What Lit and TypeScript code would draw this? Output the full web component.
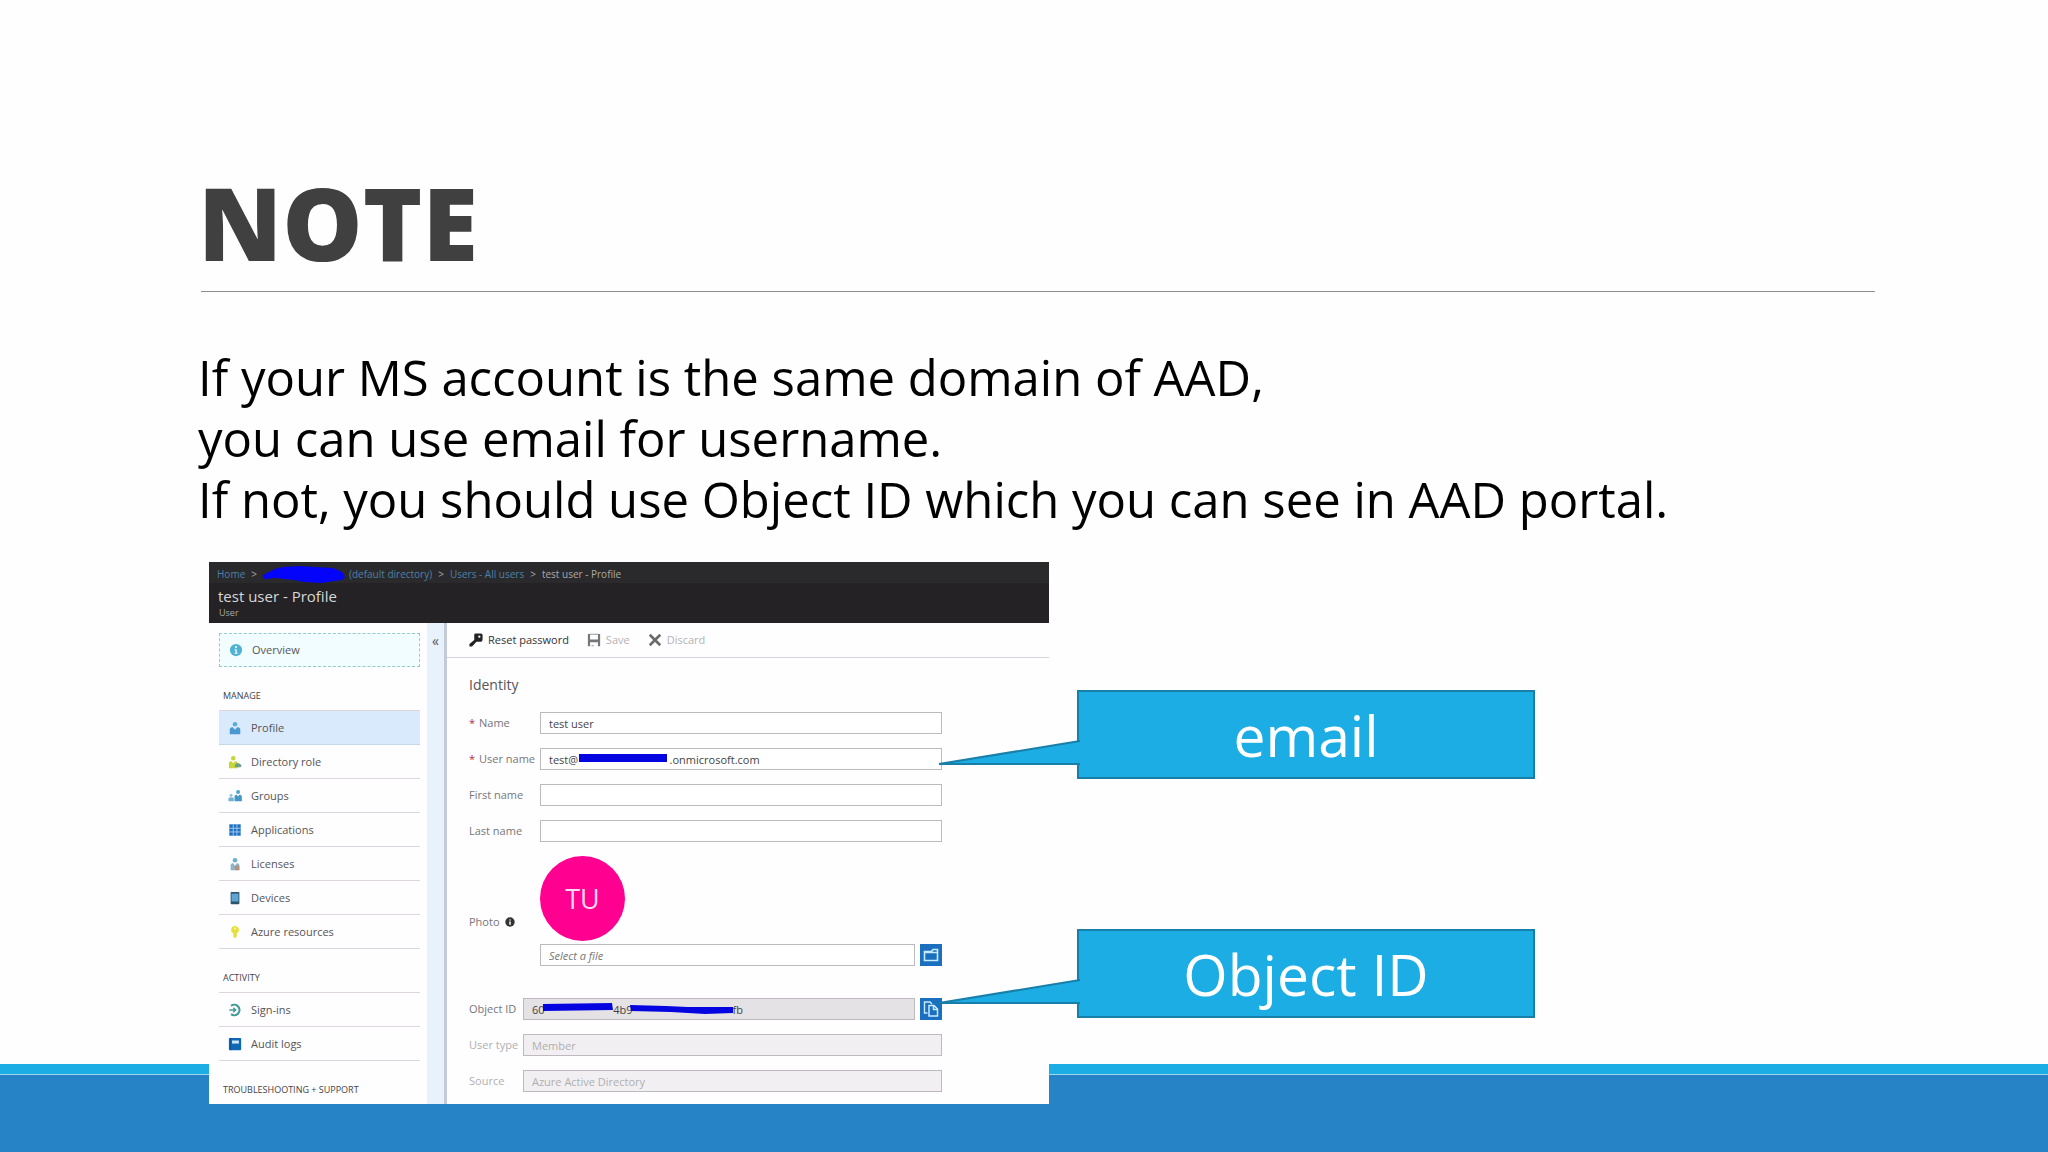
import { LitElement, html, css, svg, nothing, TemplateResult } from "lit";
import { customElement, property } from "lit/decorators.js";

type Item = { icon: string; label: string; active?: boolean };

const ICONS: Record<string, TemplateResult> = {
  info: svg`<circle cx="8" cy="8" r="7" fill="#4fb3d3"/><circle cx="8" cy="4.6" r="1.2" fill="#fff"/><path d="M6.4 7h2.4v4.2h1v1.2H6.4v-1.2h1V8.2h-1z" fill="#fff"/>`,
  profile: svg`<circle cx="8" cy="3.6" r="2.6" fill="#5aa9dc"/><path d="M2 15V9.5C2 7.6 4 7 5.4 7L8 10l2.600-3C12 7 14 7.600 14 9.500V15z" fill="#4a98d0"/>`,
  role: svg`<circle cx="6" cy="3.600" r="2.600" fill="#c5d63a"/><path d="M1 15V9.500C1 7.600 2.600 7 4 7l2 2.500L8 7c1.600 0 3 .6 3 2.500V15z" fill="#c5d63a"/><path d="M8 13.500a3 3 0 0 1 1-3.500 3.200 3.200 0 0 1 5 .5c1.600 0 1.800 3.500 0 3.500H9z" fill="#6f9f86"/>`,
  groups: svg`<circle cx="11.500" cy="3.400" r="2.300" fill="#4fa9cf"/><path d="M7.500 14V8.500C7.500 7 9 6.500 10 6.500l1.500 2 1.500-2c1.200 0 2.800.5 2.800 2V14z" fill="#4596c4"/><circle cx="3.500" cy="7.500" r="1.700" fill="#8cc3dc"/><path d="M.5 14v-2.800c0-1.200 1-1.500 2-1.500h2.200c1 0 2 .3 2 1.500V14z" fill="#6fb2d2"/>`,
  apps: svg`<path d="M1.500 1.500h13v13h-13z" fill="#1f6fc0"/><path d="M6 1.500v13M10.200 1.500v13M1.500 6h13M1.500 10.200h13" stroke="#a9d0f2" stroke-width="1"/>`,
  licenses: svg`<circle cx="8" cy="3.600" r="2.600" fill="#6aaed0"/><path d="M3 15V9.500C3 7.600 4.600 7 6 7l2 3 2-3c1.600 0 3 .6 3 2.500V15z" fill="#8fb4c8"/><path d="M8 10h5v5H8z" fill="#b98f78"/>`,
  devices: svg`<rect x="3" y="1" width="10" height="14" rx="1" fill="#2f536b"/><path d="M4 3h8v9H4z" fill="#5fa5d2"/>`,
  azure: svg`<path d="M8 1a4.500 4.500 0 0 1 2 8.500V13l-2 2-2-2V9.500A4.500 4.500 0 0 1 8 1z" fill="#e6e03a"/><circle cx="8" cy="4" r="1.200" fill="#fbf9b8"/>`,
  signins: svg`<path d="M3.500 3.200A6 6 0 1 1 3.500 12.800" fill="none" stroke="#3f9a94" stroke-width="2.400"/><path d="M1.500 8h7M6 5.400 8.800 8 6 10.600" fill="none" stroke="#3f9a94" stroke-width="1.600"/>`,
  audit: svg`<rect x="1" y="1" width="14" height="14" rx="1" fill="#0f68b4"/><path d="M4.500 4h8v3.500h-8z" fill="#c9e6fb"/><path d="M3 1v14" stroke="#0a4f90" stroke-width="1"/>`,
  key: svg`<path d="M6 1.500C7 .5 8 .5 9 .5h4.500c1.300 0 2 .8 2 2V7c0 2-1 3-3 3H8.500L3.500 15.500H.5v-3L6 8z" fill="#222"/><circle cx="11.800" cy="4.200" r="1.300" fill="#fff"/>`,
  save: svg`<path d="M1 1h2.500v6.500h9V1H15v14h-2.500v-4.500h-9V15H1z" fill="#777"/><path d="M3.500 1.500h9M5 14.500h3" stroke="#999" stroke-width="1.200"/>`,
  discard: svg`<path d="M2 2l12 12M14 2 2 14" fill="none" stroke="#6a6a6a" stroke-width="3"/>`,
  photo: svg`<circle cx="8" cy="8" r="7.500" fill="#333"/><circle cx="8" cy="4.600" r="1.200" fill="#fff"/><path d="M6.800 7h2.400v5.400H6.800z" fill="#fff"/>`,
  folder: svg`<path d="M1.500 4.500h7l1.500-2h4.500v11h-13zM1.500 5.500h13" fill="none" stroke="#c8ecff" stroke-width="1.600"/>`,
  copy: svg`<path d="M4.500 12H1.500V1h5.500l2 2" fill="none" stroke="#c8ecff" stroke-width="1.400"/><path d="M6 4.500h5l3.500 3.500v7H6z M10.500 4.500v4h4" fill="none" stroke="#c8ecff" stroke-width="1.500"/>`,
};

const icon = (name: string) =>
  html`<svg class="icon" viewBox="0 0 16 16" aria-hidden="true">${ICONS[name]}</svg>`;

const MANAGE: Item[] = [
  { icon: "profile", label: "Profile", active: true },
  { icon: "role", label: "Directory role" },
  { icon: "groups", label: "Groups" },
  { icon: "apps", label: "Applications" },
  { icon: "licenses", label: "Licenses" },
  { icon: "devices", label: "Devices" },
  { icon: "azure", label: "Azure resources" },
];

const ACTIVITY: Item[] = [
  { icon: "signins", label: "Sign-ins" },
  { icon: "audit", label: "Audit logs" },
];

const gap = (n: number) => "\u00a0".repeat(n);

@customElement("call-out")
class CallOut extends LitElement {
  @property() text = "";

  static styles = css`
    :host {
      display: flex;
      align-items: center;
      justify-content: center;
      position: relative;
      box-sizing: border-box;
      height: 89px;
      border: 2px solid #187fa8;
      background: #1cade4;
      color: #fff;
      font-size: 57px;
      line-height: 76px;
    }
    .tail {
      position: absolute;
      right: 100%;
      top: 47px;
      width: 143px;
      height: 28px;
      margin-right: -2px;
    }
  `;

  render() {
    return html`<svg class="tail" viewBox="0 0 143 28" aria-hidden="true">
        <path d="M143 2 1 25H143z" fill="#1cade4" />
        <path d="M142 2 1 25H142" fill="none" stroke="#187fa8" stroke-width="2" />
      </svg>
      <span>${this.text}</span>`;
  }
}

@customElement("user-portal")
class UserPortal extends LitElement {
  static styles = css`
    :host {
      display: flex;
      flex-direction: column;
      overflow: hidden;
      background: #fefdff;
      color: #555;
      font-size: 11px;
      line-height: 16px;
    }
    * {
      box-sizing: border-box;
    }
    .icon {
      width: 14px;
      height: 14px;
      flex: none;
      display: block;
    }
    a {
      color: inherit;
      text-decoration: none;
    }
    .top {
      height: 61px;
      flex: none;
      background: #242224;
      color: #d8d8d8;
    }
    .crumbs {
      display: flex;
      align-items: center;
      gap: 6px;
      height: 21px;
      padding: 2px 8px 0;
      background: #2a292b;
      font-size: 10px;
      color: #aaa;
    }
    .crumbs a {
      color: #4a82a8;
    }
    .directory {
      display: flex;
      align-items: center;
      gap: 2px;
    }
    .scribble {
      width: 84px;
      height: 18px;
      display: block;
    }
    h2 {
      margin: 0;
      padding: 2px 9px 0;
      font-size: 15px;
      line-height: 22px;
      font-weight: 400;
    }
    .kind {
      margin: 0;
      padding: 0 10px;
      font-size: 9px;
      line-height: 12px;
      color: #aaa;
    }
    .body {
      flex: 1;
      display: flex;
    }
    .side {
      width: 218px;
      padding: 10px 7px 0 10px;
    }
    .overview,
    .item {
      display: flex;
      align-items: center;
      gap: 9px;
      padding: 0 9px;
      height: 34px;
    }
    .overview {
      border: 1px dashed #8fcbd0;
      background: #f1fdff;
    }
    .item {
      border-bottom: 1px solid #ddd6dc;
    }
    .item.active {
      background: #d9eafc;
      border-color: #c4d8ea;
    }
    h3 {
      margin: 0;
      padding: 21px 4px 6px;
      font-size: 9px;
      line-height: 16px;
      font-weight: 400;
      color: #444;
      border-bottom: 1px solid #ddd6dc;
    }
    ul {
      list-style: none;
      margin: 0;
      padding: 0;
    }
    .strip {
      width: 17px;
      background: #e8f2fc;
      padding: 10px 0 0;
    }
    .fold {
      width: 100%;
      border: 0;
      padding: 0;
      background: none;
      font: inherit;
      font-size: 14px;
      line-height: 16px;
      color: #555;
    }
    .main {
      flex: 1;
      min-width: 0;
      border-left: 3px solid #c3cbd8;
    }
    .tools {
      display: flex;
      align-items: center;
      gap: 18px;
      height: 35px;
      padding-left: 22px;
      border-bottom: 1px solid #d8d4da;
    }
    .tools button {
      display: flex;
      align-items: center;
      gap: 5px;
      padding: 0;
      border: 0;
      background: none;
      font: inherit;
      color: #333;
    }
    .tools button:disabled {
      color: #b4b4b4;
    }
    form {
      padding: 17px 107px 0 22px;
    }
    h4 {
      margin: 0 0 17px;
      font-size: 14px;
      line-height: 20px;
      font-weight: 400;
      color: #555;
    }
    .row {
      display: grid;
      grid-template-columns: 71px minmax(0, 1fr);
      align-items: center;
      height: 22px;
      margin-bottom: 14px;
      color: #777;
    }
    .row.tight {
      grid-template-columns: 54px minmax(0, 1fr);
    }
    .row.off {
      color: #b0b0b0;
    }
    label {
      display: flex;
      align-items: center;
      gap: 5px;
      white-space: nowrap;
    }
    label .icon {
      width: 10px;
      height: 10px;
    }
    .req {
      color: #b03040;
      width: 5px;
    }
    .box {
      position: relative;
      display: flex;
      gap: 5px;
    }
    input {
      flex: 1;
      min-width: 0;
      height: 22px;
      padding: 0 8px;
      border: 1px solid #bdb9bf;
      border-radius: 0;
      background: #fff;
      font: inherit;
      color: #444;
    }
    input::placeholder {
      font-style: italic;
      color: #777;
    }
    input.shade {
      background: #e4e2e4;
    }
    input:disabled {
      background: #f1eff2;
      color: #b0b0b0;
    }
    .pick {
      width: 22px;
      height: 22px;
      padding: 3px;
      border: 0;
      background: #1a6fbe;
    }
    .pick .icon {
      width: 16px;
      height: 16px;
    }
    .redact {
      position: absolute;
      left: 0;
      top: 0;
      height: 22px;
      width: 220px;
    }
    .photo {
      display: grid;
      grid-template-columns: 71px minmax(0, 1fr);
      align-items: center;
      color: #777;
      margin-bottom: 32px;
    }
    .photo label {
      padding-top: 22px;
    }
    .face {
      display: grid;
      place-items: center;
      width: 85px;
      height: 85px;
      margin-bottom: 3px;
      border-radius: 50%;
      background: #ff0090;
      color: #ffd9f0;
      font-size: 27px;
      line-height: 36px;
    }
  `;

  private items(list: Item[]) {
    return html`<ul>
      ${list.map(
        (i) => html`<li>
          <a class="item ${i.active ? "active" : ""}" href="#">${icon(i.icon)}<span>${i.label}</span></a>
        </li>`,
      )}
    </ul>`;
  }

  private field(id: string, label: string, value: string, required = false, redact: unknown = nothing) {
    return html`<div class="row">
      <label for=${id}>${required ? html`<span class="req">*</span>` : nothing}${label}</label>
      <div class="box"><input id=${id} type="text" .value=${value} />${redact}</div>
    </div>`;
  }

  render() {
    return html`
      <header class="top">
        <nav class="crumbs" aria-label="Breadcrumb">
          <a href="#">Home</a><span>&gt;</span>
          <a class="directory" href="#">
            <svg class="scribble" viewBox="0 0 84 18" aria-hidden="true">
              <path d="M0 10 8 6l4-2 8-2 16-1 16 1 18 1 9 4 3 5-3 3-8 1-12 2-18-1-10-2-10-1-8-1-12 1z" fill="#0404fa" />
            </svg>
            <span>(default directory)</span>
          </a>
          <span>&gt;</span><a href="#">Users - All users</a><span>&gt;</span>
          <span>test user - Profile</span>
        </nav>
        <h2>test user - Profile</h2>
        <p class="kind">User</p>
      </header>
      <div class="body">
        <nav class="side" aria-label="User">
          <a class="overview" href="#">${icon("info")}<span>Overview</span></a>
          <h3>MANAGE</h3>
          ${this.items(MANAGE)}
          <h3>ACTIVITY</h3>
          ${this.items(ACTIVITY)}
          <h3>TROUBLESHOOTING + SUPPORT</h3>
        </nav>
        <div class="strip"><button class="fold" type="button">«</button></div>
        <section class="main">
          <div class="tools">
            <button type="button">${icon("key")}Reset password</button>
            <button type="button" disabled>${icon("save")}Save</button>
            <button type="button" disabled>${icon("discard")}Discard</button>
          </div>
          <form>
            <h4>Identity</h4>
            ${this.field("name", "Name", "test user", true)}
            ${this.field(
              "user",
              "User name",
              `test@${gap(32)}.onmicrosoft.com`,
              true,
              html`<svg class="redact" viewBox="0 0 220 22" aria-hidden="true">
                <path d="M39 6h88v8H39z" fill="#0404e0" />
              </svg>`,
            )}
            ${this.field("first", "First name", "")} ${this.field("last", "Last name", "")}
            <div class="photo">
              <label for="photo">Photo ${icon("photo")}</label>
              <div>
                <div class="face">TU</div>
                <div class="box">
                  <input id="photo" type="text" placeholder="Select a file" />
                  <button class="pick" type="button" aria-label="Browse">${icon("folder")}</button>
                </div>
              </div>
            </div>
            <div class="row tight">
              <label for="oid">Object ID</label>
              <div class="box">
                <input id="oid" class="shade" type="text" readonly .value=${`60${gap(24)}4b9${gap(35)}fb`} />
                <svg class="redact" viewBox="0 0 220 22" aria-hidden="true">
                  <path d="M20 6l69-1 1 7-70 1z M107 7l36 1 22 1h45v6l-28 1-34-2-40-1z" fill="#0404e0" />
                </svg>
                <button class="pick" type="button" aria-label="Copy">${icon("copy")}</button>
              </div>
            </div>
            <div class="row tight off">
              <label for="type">User type</label>
              <div class="box"><input id="type" type="text" disabled value="Member" /></div>
            </div>
            <div class="row tight off">
              <label for="source">Source</label>
              <div class="box"><input id="source" type="text" disabled value="Azure Active Directory" /></div>
            </div>
          </form>
        </section>
      </div>
    `;
  }
}

@customElement("app-root")
class AppRoot extends LitElement {
  static styles = css`
    :host {
      display: grid;
      grid-template-columns: minmax(0, 1fr);
      grid-template-rows: 1fr 10px 1px 77px;
      min-height: 100vh;
      background: #fefefe;
      font-family: "Open Sans", "Noto Sans", sans-serif;
    }
    .slide {
      grid-area: 1 / 1 / 5 / 2;
      z-index: 1;
      padding: 162px 173px 48px 198px;
    }
    .cyan {
      grid-area: 2 / 1;
      background: #1cade4;
    }
    .seam {
      grid-area: 3 / 1;
      background: #9fd3ee;
    }
    .blue {
      grid-area: 4 / 1;
      background: #2683c6;
    }
    h1 {
      margin: 0;
      padding-bottom: 9px;
      color: #404040;
      font-size: 101px;
      line-height: 120px;
      font-weight: 800;
    }
    hr {
      margin: 0 0 0 3px;
      border: 0;
      height: 1px;
      background: #8c8e8d;
    }
    p {
      margin: 55px 0 32px;
      color: #000;
      font-size: 49px;
      line-height: 61px;
    }
    .figure {
      display: flex;
      align-items: flex-start;
      gap: 28px;
      padding-left: 11px;
    }
    user-portal {
      flex: 0 1 840px;
      height: 542px;
    }
    .notes {
      flex: 0 1 458px;
      display: flex;
      flex-direction: column;
      gap: 150px;
      padding-top: 128px;
    }
  `;

  render() {
    return html`
      <main class="slide">
        <h1>NOTE</h1>
        <hr />
        <p>
          If your MS account is the same domain of AAD,<br />you can use email for username.<br />If not, you should use
          Object ID which you can see in AAD portal.
        </p>
        <div class="figure">
          <user-portal></user-portal>
          <div class="notes">
            <call-out text="email"></call-out>
            <call-out text="Object ID"></call-out>
          </div>
        </div>
      </main>
      <div class="cyan"></div>
      <div class="seam"></div>
      <div class="blue"></div>
    `;
  }
}
